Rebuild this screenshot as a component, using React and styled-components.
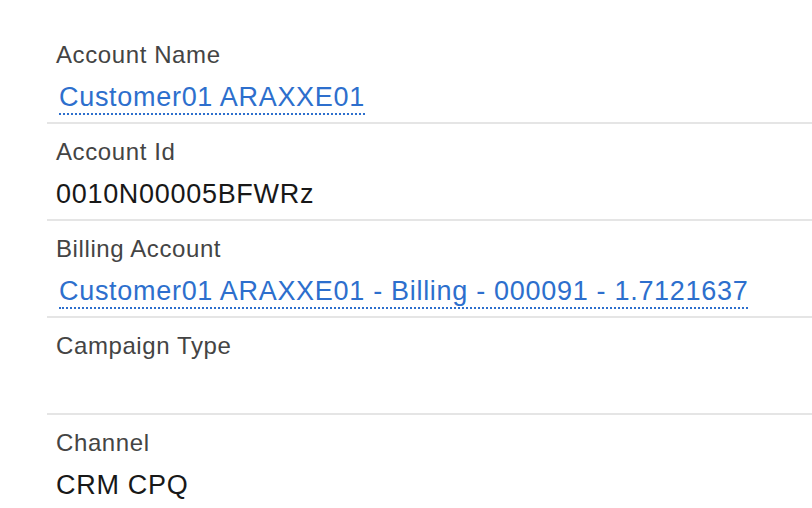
import styled, { createGlobalStyle } from 'styled-components';

const fields = [
    { label: 'Account Name', value: 'Customer01 ARAXXE01', link: true },
    { label: 'Account Id', value: '0010N00005BFWRz' },
    { label: 'Billing Account', value: 'Customer01 ARAXXE01 - Billing - 000091 - 1.7121637', link: true },
    { label: 'Campaign Type', value: '' },
    { label: 'Channel', value: 'CRM CPQ' },
];

const App = () => {
    return (
        <>
            <GlobalStyle />
            <Panel>
                {fields.map((f, id) => (
                    <Field key={id} last={id === fields.length - 1}>
                        <Label>{f.label}</Label>
                        <Value>
                            {f.link ? <Link href="#">{f.value}</Link> : f.value}
                        </Value>
                    </Field>
                ))}
            </Panel>
        </>
    )
}

export default App;

const GlobalStyle = createGlobalStyle`
    html, body {
        margin: 0;
        padding: 0;
        background: #ffffff;
        font-family: 'Liberation Sans', Arial, sans-serif;
    }
`;

const Panel = styled.div`
    display: flex;
    flex-direction: column;
    padding-top: 27px;
    margin-left: 47px;
`;

const Field = styled.div`
    display: flex;
    flex-direction: column;
    gap: 12px;
    padding: 14px 0 9px 9px;
    border-bottom: 2px solid ${props => props.last ? 'transparent' : '#e5e5e5'};
`;

const Label = styled.div`
    font-size: 24px;
    line-height: 28px;
    letter-spacing: 0.6px;
    color: #444444;
`;

const Value = styled.div`
    height: 32px;
    font-size: 27px;
    line-height: 32px;
    letter-spacing: 0.7px;
    color: #181818;
    white-space: nowrap;
`;

const Link = styled.a`
    display: inline-block;
    margin-left: 3px;
    color: #2d6fcd;
    text-decoration: none;
    border-bottom: 2px dotted #2d6fcd;
`;
